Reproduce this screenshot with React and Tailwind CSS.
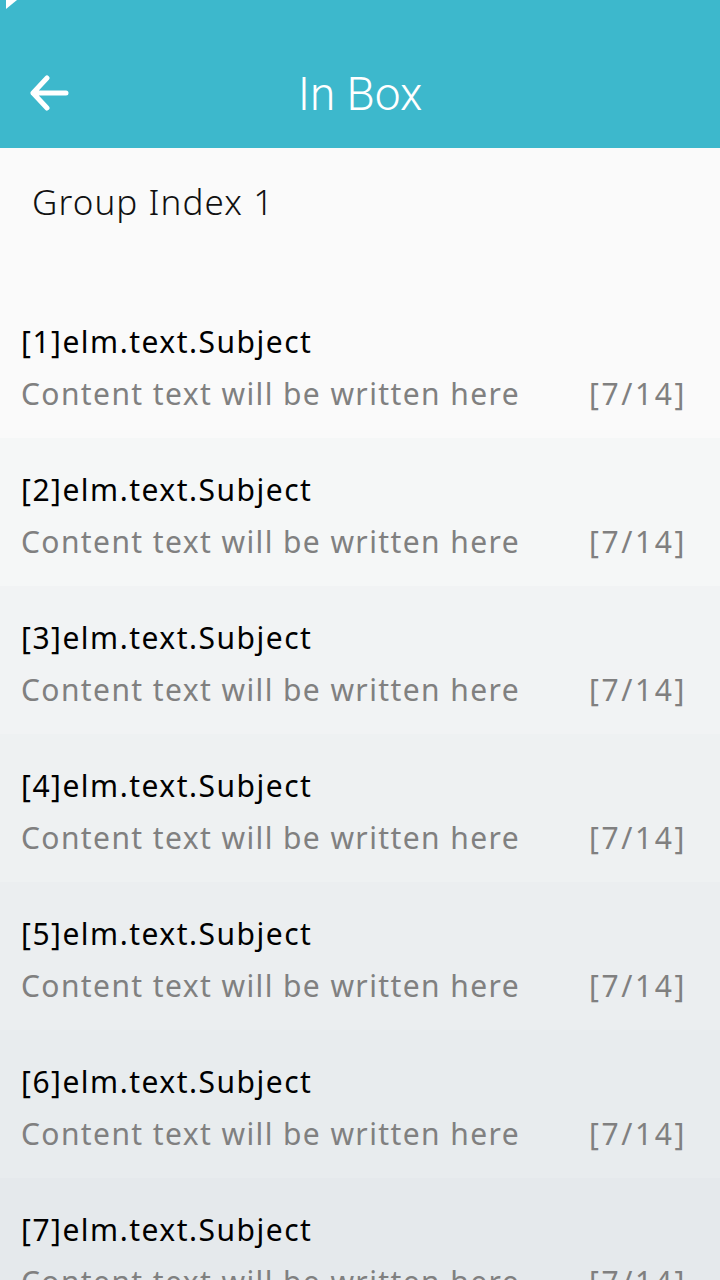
import React from 'react';

const items = [
  { id: 1, bg: 'bg-[#fafafa]' },
  { id: 2, bg: 'bg-[#f5f7f7]' },
  { id: 3, bg: 'bg-[#f1f3f4]' },
  { id: 4, bg: 'bg-[#eef1f2]' },
  { id: 5, bg: 'bg-[#ebeef0]' },
  { id: 6, bg: 'bg-[#e8ecee]' },
  { id: 7, bg: 'bg-[#e5e9ec]' },
];

const BackArrow = () => (
  <svg width="40" height="36" viewBox="0 0 40 36" fill="none">
    <path
      d="M4 18 H37 M18 3 L4 18 L18 33"
      stroke="white"
      strokeWidth="5"
      strokeLinecap="round"
      strokeLinejoin="round"
    />
  </svg>
);

const App = () => {
  return (
    <div className="w-[720px] h-[1280px] overflow-hidden bg-[#fafafa] font-['Noto_Sans',sans-serif]">
      {/* header */}
      <div className="relative h-[148px] bg-[#3db8cc] flex items-center">
        <svg className="absolute left-[6px] top-0" width="11" height="9" viewBox="0 0 11 9">
          <polygon points="0,0 11,0 0,9" fill="white" />
        </svg>
        <div className="pl-[29px] pt-[38px]">
          <BackArrow />
        </div>
        <h1 className="absolute left-0 right-0 top-[64px] text-center text-white text-[46px] leading-[60px] font-light font-['Roboto',sans-serif]">
          In Box
        </h1>
      </div>

      {/* group index */}
      <div className="h-[142px] pl-[32px]">
        <div className="pt-[30px] text-[35px] leading-[48px] tracking-[1.1px] font-light text-[#111]">Group Index 1</div>
      </div>

      {/* list */}
      <div className="flex flex-col">
        {items.map(item => (
          <div key={item.id} className={`h-[148px] pl-[21px] pr-[33px] ${item.bg}`}>
            <div className="pt-[32px] text-[30px] leading-[40px] tracking-[1.5px] text-black">
              [{item.id}]elm.text.Subject
            </div>
            <div className="flex justify-between pt-[12px] text-[30px] leading-[40px] text-[#808080]">
              <span className="tracking-[1.4px]">Content text will be written here</span>
              <span className="tracking-[2.6px]">[7/14]</span>
            </div>
          </div>
        ))}
      </div>
    </div>
  );
};

export default App;
